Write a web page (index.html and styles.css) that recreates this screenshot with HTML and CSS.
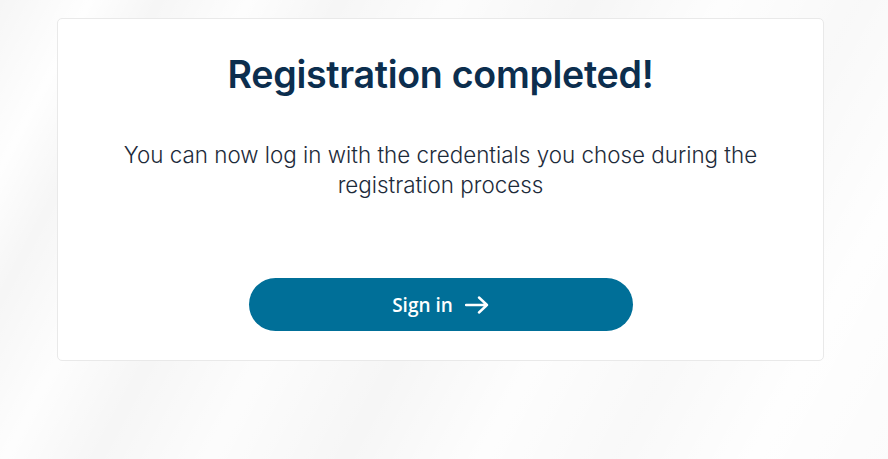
FILE: index.html
```html
<!DOCTYPE html>
<html lang="en">
<head>
<meta charset="utf-8">
<title>Registration completed</title>
<link rel="stylesheet" href="styles.css">
</head>
<body>
<main class="page">
  <section class="card">
    <h1 class="title">Registration completed!</h1>
    <p class="message">You can now log in with the credentials you chose during the registration process</p>
    <a class="btn" href="#">
      <span>Sign in</span>
      <svg class="arrow" width="24" height="18" viewBox="0 0 24 18" aria-hidden="true">
        <path d="M1 9H22M14 1.5L22 9L14 16.5" fill="none" stroke="#fff" stroke-width="2.4" stroke-linecap="round" stroke-linejoin="round"/>
      </svg>
    </a>
  </section>
</main>
</body>
</html>
```

FILE: styles.css
```css
html, body {
  margin: 0;
  height: 100%;
}
body {
  background-color: #f6f6f6;
  background-image:
    linear-gradient(118deg, rgba(255,255,255,0) 0%, rgba(255,255,255,0.9) 8%, rgba(255,255,255,0) 14%, rgba(255,255,255,0.8) 22%, rgba(255,255,255,0) 30%, rgba(255,255,255,0.7) 40%, rgba(255,255,255,0) 52%, rgba(255,255,255,0.8) 64%, rgba(255,255,255,0.3) 76%, rgba(255,255,255,0.9) 88%, rgba(255,255,255,0.6) 100%);
  font-family: "Inter", "Lato", sans-serif;
  overflow: hidden;
}
.page {
  padding: 18px 0 0 57px;
}
.card {
  box-sizing: border-box;
  width: 767px;
  height: 343px;
  background: #fff;
  border: 1px solid #e9e9e9;
  border-radius: 5px;
  display: flex;
  flex-direction: column;
  align-items: center;
  padding-top: 32px;
}
.title {
  margin: 0;
  font-family: "Inter", sans-serif;
  font-weight: 600;
  font-size: 37.6px;
  line-height: 48px;
  color: #0c2e4e;
  letter-spacing: -0.3px;
}
.message {
  margin: 41px 0 0;
  width: 680px;
  text-align: center;
  font-family: "Inter", sans-serif;
  font-weight: 300;
  font-size: 22.4px;
  line-height: 30px;
  color: #1d2b3a;
}
.btn {
  margin-top: 78px;
  width: 384px;
  height: 53px;
  border-radius: 27px;
  background: #006f98;
  color: #fff;
  text-decoration: none;
  display: flex;
  align-items: center;
  justify-content: center;
  gap: 12px;
  font-family: "Open Sans", sans-serif;
  font-weight: 600;
  font-size: 19px;
}
.arrow {
  display: block;
  margin-top: 1px;
}
```
